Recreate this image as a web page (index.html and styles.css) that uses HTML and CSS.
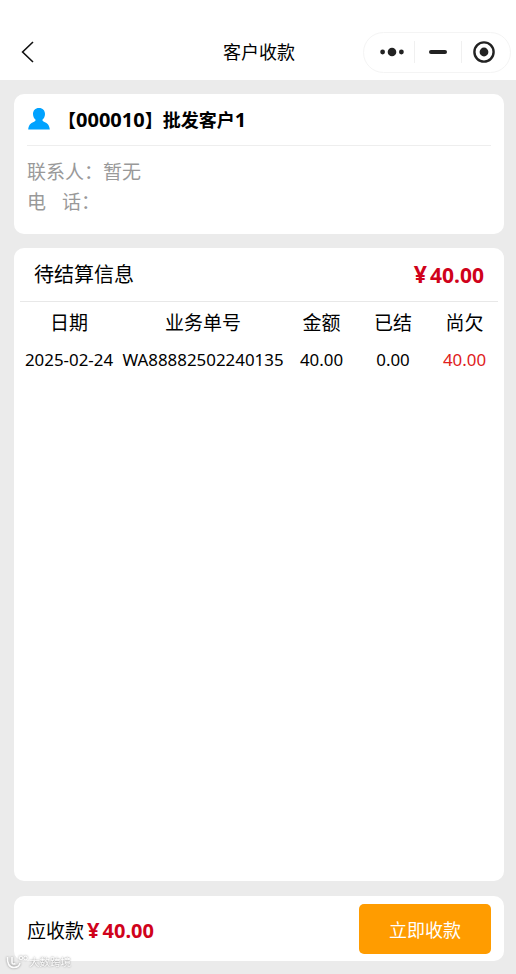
FILE: index.html

```html
<!DOCTYPE html>
<html lang="zh-CN">
<head>
    <meta charset="UTF-8">
    <meta name="viewport" content="width=device-width, initial-scale=1.0">
    <title>客户收款</title>
    <link rel="stylesheet" href="styles.css">
</head>
<body>
    <div class="page">
        <header class="navbar">
            <svg class="back" width="13" height="22" viewBox="0 0 13 22">
                <path d="M12 1 L1.6 11 L12 21" fill="none" stroke="#111" stroke-width="1.6"/>
            </svg>
            <div class="nav-title">客户收款</div>
            <div class="capsule">
                <div class="cap-item cap-more">
                    <svg width="24" height="10" viewBox="0 0 24 10">
                        <circle cx="2.6" cy="5" r="2.4" fill="#222"/>
                        <circle cx="12" cy="5" r="4.3" fill="#222"/>
                        <circle cx="21.4" cy="5" r="2.4" fill="#222"/>
                    </svg>
                </div>
                <div class="cap-item cap-min">
                    <svg width="18" height="4" viewBox="0 0 18 4">
                        <rect width="18" height="4" rx="2" fill="#222"/>
                    </svg>
                </div>
                <div class="cap-item cap-close">
                    <svg width="22" height="22" viewBox="0 0 22 22">
                        <circle cx="11" cy="11" r="9.6" fill="none" stroke="#222" stroke-width="2.4"/>
                        <circle cx="11" cy="11" r="4.4" fill="#222"/>
                    </svg>
                </div>
            </div>
        </header>

        <section class="card customer">
            <div class="customer-name">
                <svg width="22" height="22" viewBox="0 0 22 22">
                    <path d="M11 0 C14.8 0 17 2.6 17 6 C17 8.6 15.8 10.6 14.4 11.8 C14.4 12.8 15 13.4 16.4 14 C19.4 15.2 21.4 17 21.8 21.6 L0.2 21.6 C0.6 17 2.6 15.2 5.6 14 C7 13.4 7.6 12.8 7.6 11.8 C6.2 10.6 5 8.6 5 6 C5 2.6 7.2 0 11 0 Z" fill="#00a2ff"/>
                </svg>
                <span>【<span class="latin">000010</span>】批发客户<span class="latin">1</span></span>
            </div>
            <div class="customer-info">
                <div>联系人：暂无</div>
                <div>电<span class="gap"></span>话：</div>
            </div>
        </section>

        <section class="card bills">
            <div class="bills-head">
                <span>待结算信息</span>
                <span class="money money-lg"><span class="yen">¥</span>40.00</span>
            </div>
            <table>
                <thead>
                    <tr>
                        <th>日期</th>
                        <th>业务单号</th>
                        <th>金额</th>
                        <th>已结</th>
                        <th>尚欠</th>
                    </tr>
                </thead>
                <tbody>
                    <tr>
                        <td>2025-02-24</td>
                        <td>WA88882502240135</td>
                        <td>40.00</td>
                        <td>0.00</td>
                        <td class="owed">40.00</td>
                    </tr>
                </tbody>
            </table>
        </section>

        <footer class="card paybar">
            <div class="due">应收款<span class="money"><span class="yen">¥</span>40.00</span></div>
            <button class="pay-btn">立即收款</button>
        </footer>

        <div class="watermark">
            <svg width="22" height="14" viewBox="0 0 22 14">
                <path d="M1.5 2 C1 8 3 12.5 8 12.5 C11.5 12.5 13.5 10.5 14 8 M6 2 L6 7.5 C6 9 8 9.5 9.5 8.5" fill="none" stroke="#fff" stroke-width="1.6"/>
                <circle cx="15" cy="3" r="1.8" fill="none" stroke="#fff" stroke-width="1"/>
                <circle cx="19.5" cy="3" r="1.8" fill="none" stroke="#fff" stroke-width="1"/>
            </svg>
            <span>大数跨境</span>
        </div>
    </div>
</body>
</html>
```

FILE: styles.css

```css
* {
    box-sizing: border-box;
}

html, body {
    margin: 0;
    padding: 0;
}

body {
    background-color: #ebebeb;
    color: #000;
    font-family: "Noto Sans", "Noto Sans CJK SC", sans-serif;
}

.page {
    position: relative;
    display: flex;
    flex-direction: column;
    width: 516px;
    height: 974px;
    overflow: hidden;
}

.navbar {
    position: relative;
    display: flex;
    align-items: center;
    flex: none;
    height: 80px;
    padding: 24px 5px 0 21px;
    background-color: #fff;
}

.back {
    flex: none;
}

/* centred on the window, not between back and capsule */
.nav-title {
    position: absolute;
    left: 2px;
    right: 0;
    top: 39px;
    font-size: 18px;
    line-height: 26px;
    text-align: center;
}

.capsule {
    display: flex;
    align-items: center;
    width: 148px;
    height: 41px;
    margin-left: auto;
    border: 1px solid #f4f4f4;
    border-radius: 21px;
    background-color: #fff;
}

.cap-item {
    display: flex;
    align-items: center;
    justify-content: center;
    height: 22px;
}

.cap-more {
    width: 50px;
    padding-left: 5px;
}

.cap-min {
    width: 47px;
    border-left: 1px solid #f0f0f0;
}

.cap-close {
    width: 49px;
    padding-right: 5px;
    border-left: 1px solid #f0f0f0;
}

.card {
    margin: 0 12px 0 14px;
    background-color: #fff;
    border-radius: 10px;
}

.customer {
    flex: none;
    height: 140px;
    margin-top: 14px;
    padding: 0 13px;
}

.customer-name {
    display: flex;
    align-items: center;
    height: 52px;
    border-bottom: 1px solid #eeeeee;
    font-size: 18px;
    font-weight: bold;
}

.customer-name svg {
    margin: -1px 8px 0 1px;
}

.customer-name .latin {
    font-size: 20px;
}

.customer-info {
    padding-top: 11px;
    color: #999;
    font-size: 19px;
    line-height: 30px;
}

.gap {
    display: inline-block;
    width: 16px;
}

.bills {
    flex: none;
    height: 633px;
    margin-top: 14px;
    padding: 0 6px;
}

.bills-head {
    display: flex;
    justify-content: space-between;
    align-items: center;
    height: 54px;
    padding: 0 14px 2px;
    border-bottom: 1px solid #e8e8e8;
    font-size: 20px;
}

.money {
    color: #d0021b;
    font-size: 20px;
    font-weight: bold;
}

.money-lg {
    font-size: 21px;
}

.yen {
    margin-right: 3px;
    font-size: 1.1em;
}

.bills table {
    width: 100%;
    border-collapse: collapse;
    table-layout: fixed;
}

.bills th {
    height: 40px;
    padding: 0;
    font-size: 19px;
    font-weight: normal;
    white-space: nowrap;
}

.bills td {
    height: 36px;
    padding: 0 0 2px;
    font-size: 16.9px;
    text-align: center;
    white-space: nowrap;
}

.bills th:nth-child(1), .bills td:nth-child(1) { width: 98px; }
.bills th:nth-child(2), .bills td:nth-child(2) { width: 170px; }
.bills th:nth-child(3), .bills td:nth-child(3) { width: 67px; }
.bills th:nth-child(4), .bills td:nth-child(4) { width: 76px; }

.bills .owed {
    color: #e02020;
}

.paybar {
    display: flex;
    justify-content: space-between;
    align-items: center;
    flex: none;
    height: 65px;
    margin-top: 15px;
    padding: 0 13px;
}

.due {
    font-size: 19px;
}

.due .money {
    margin-left: 3px;
}

.pay-btn {
    width: 132px;
    height: 50px;
    border: 0;
    border-radius: 5px;
    background-color: #ff9c00;
    color: #fff;
    font-family: inherit;
    font-size: 18px;
}

.watermark {
    position: absolute;
    left: 6px;
    bottom: 5px;
    display: flex;
    align-items: center;
    gap: 1px;
    color: #fff;
    font-size: 10.5px;
    line-height: 14px;
    opacity: 0.85;
    text-shadow: 0 0 2px #666;
}

.watermark svg {
    filter: drop-shadow(0 0 1px #777);
}
```
